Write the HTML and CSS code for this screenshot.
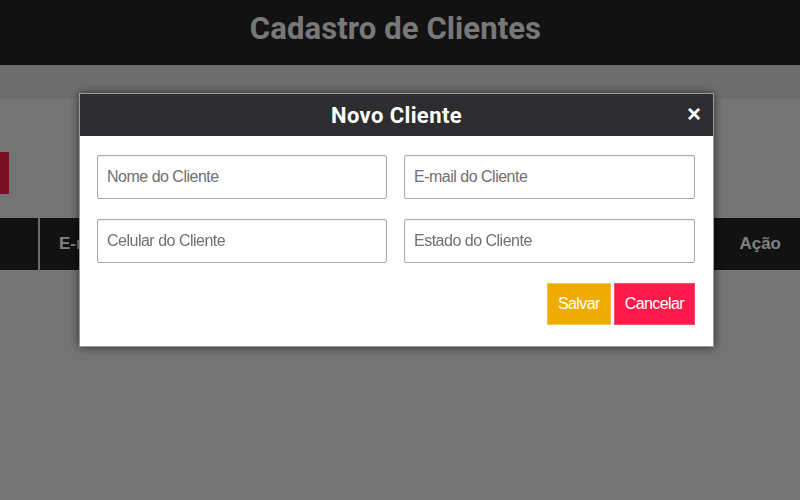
FILE: index.html
```html
<!DOCTYPE html>
<html lang="pt-BR">
<head>
<meta charset="utf-8">
<title>Cadastro de Clientes</title>
<link rel="stylesheet" href="styles.css">
</head>
<body>
  <div class="page">
    <header class="topbar">
      <h1 class="topbar-title">Cadastro de Clientes</h1>
    </header>
    <nav class="subbar"></nav>
    <main class="content">
      <div class="toolbar">
        <button class="btn-add" type="button" aria-label="Cadastrar Cliente"></button>
      </div>
      <table class="grid">
        <thead>
          <tr>
            <th class="col-id"></th>
            <th class="col-mail">E-mail</th>
            <th class="col-fill">Celular</th>
            <th class="col-action">Ação</th>
          </tr>
        </thead>
      </table>
    </main>
  </div>

  <div class="backdrop"></div>

  <div class="modal" role="dialog" aria-labelledby="modal-title">
    <div class="modal-header">
      <h2 class="modal-title" id="modal-title">Novo Cliente</h2>
      <button class="modal-close" type="button" aria-label="Fechar">&times;</button>
    </div>
    <form class="modal-body">
      <div class="field-grid">
        <input class="field" type="text" placeholder="Nome do Cliente">
        <input class="field" type="email" placeholder="E-mail do Cliente">
        <input class="field" type="text" placeholder="Celular do Cliente">
        <input class="field" type="text" placeholder="Estado do Cliente">
      </div>
      <div class="actions">
        <button class="btn btn-save" type="button">Salvar</button>
        <button class="btn btn-cancel" type="button">Cancelar</button>
      </div>
    </form>
  </div>
</body>
</html>
```

FILE: styles.css
```css
* {
  box-sizing: border-box;
}

html, body {
  margin: 0;
  padding: 0;
  height: 100%;
}

body {
  background: #e8e8e8;
  font-family: "Liberation Sans", Arial, sans-serif;
  overflow: hidden;
}

.page {
  display: flex;
  flex-direction: column;
  min-height: 100%;
}

.topbar {
  height: 65px;
  background: #242424;
  display: flex;
  align-items: center;
  justify-content: center;
  padding-right: 9px;
  padding-bottom: 8px;
}

.topbar-title {
  margin: 0;
  font-family: Roboto, "Liberation Sans", sans-serif;
  font-weight: 700;
  font-size: 31px;
  color: #f0f0f0;
  letter-spacing: 0.1px;
}

.subbar {
  height: 33px;
  background: #dddddd;
  border-bottom: 1px solid #d2d2d2;
}

.content {
  padding-top: 54px;
}

.toolbar {
  display: flex;
  margin-bottom: 24px;
}

.btn-add {
  width: 9px;
  height: 42px;
  border: 0;
  padding: 0;
  background: #f42049;
}

.grid {
  width: 100%;
  border-collapse: collapse;
  table-layout: fixed;
}

.grid th {
  height: 52px;
  background: #242424;
  color: #ffffff;
  font-family: "Liberation Sans", Arial, sans-serif;
  font-weight: 700;
  font-size: 17px;
  text-align: left;
  padding: 0 19px;
  border-right: 2px solid #d8d8d8;
  border-bottom: 1px solid #eeeeee;
}

.grid .col-id {
  width: 39px;
}

.grid .col-mail {
  width: 300px;
}

.grid .col-action {
  width: 88px;
  text-align: right;
  border-right: 0;
}

.backdrop {
  position: fixed;
  inset: 0;
  background: rgba(0, 0, 0, 0.5);
}

.modal {
  position: fixed;
  left: 79px;
  top: 93px;
  width: 635px;
  background: #ffffff;
  border: 1px solid #9a9a9a;
  box-shadow: 0 0 9px rgba(0, 0, 0, 0.6);
}

.modal-header {
  position: relative;
  height: 42px;
  background: #2d2d2f;
  display: flex;
  align-items: center;
  justify-content: center;
}

.modal-title {
  margin: 0;
  font-family: Roboto, "Liberation Sans", sans-serif;
  font-weight: 700;
  font-size: 22px;
  letter-spacing: 0.4px;
  color: #ffffff;
}

.modal-close {
  position: absolute;
  right: 8px;
  top: 6px;
  border: 0;
  background: transparent;
  color: #ffffff;
  font-family: "Liberation Sans", Arial, sans-serif;
  font-weight: 700;
  font-size: 24px;
  line-height: 28px;
  padding: 0 4px;
}

.modal-body {
  margin: 0;
  padding: 19px 18px 21px 17px;
}

.field-grid {
  display: grid;
  grid-template-columns: 290px 291px;
  column-gap: 17px;
  row-gap: 20px;
}

.field {
  height: 44px;
  width: 100%;
  border: 1px solid #aaaaaa;
  border-radius: 2px;
  box-shadow: inset 0 1px 2px rgba(0, 0, 0, 0.08);
  padding: 0 9px;
  font-family: "Liberation Sans", Arial, sans-serif;
  font-size: 16px;
  letter-spacing: -0.5px;
  color: #333333;
  background: #ffffff;
}

.field::placeholder {
  color: #707070;
}

.actions {
  display: flex;
  justify-content: flex-end;
  gap: 3px;
  margin-top: 20px;
}

.btn {
  height: 42px;
  padding: 0 10px;
  border: 1px solid transparent;
  font-family: "Liberation Sans", Arial, sans-serif;
  font-size: 16px;
  letter-spacing: -0.6px;
  color: #ffffff;
}

.btn-save {
  background: #efac00;
  border-color: #f6c24a;
}

.btn-cancel {
  background: #ff1a4b;
  border-color: #ff4a70;
}
```
